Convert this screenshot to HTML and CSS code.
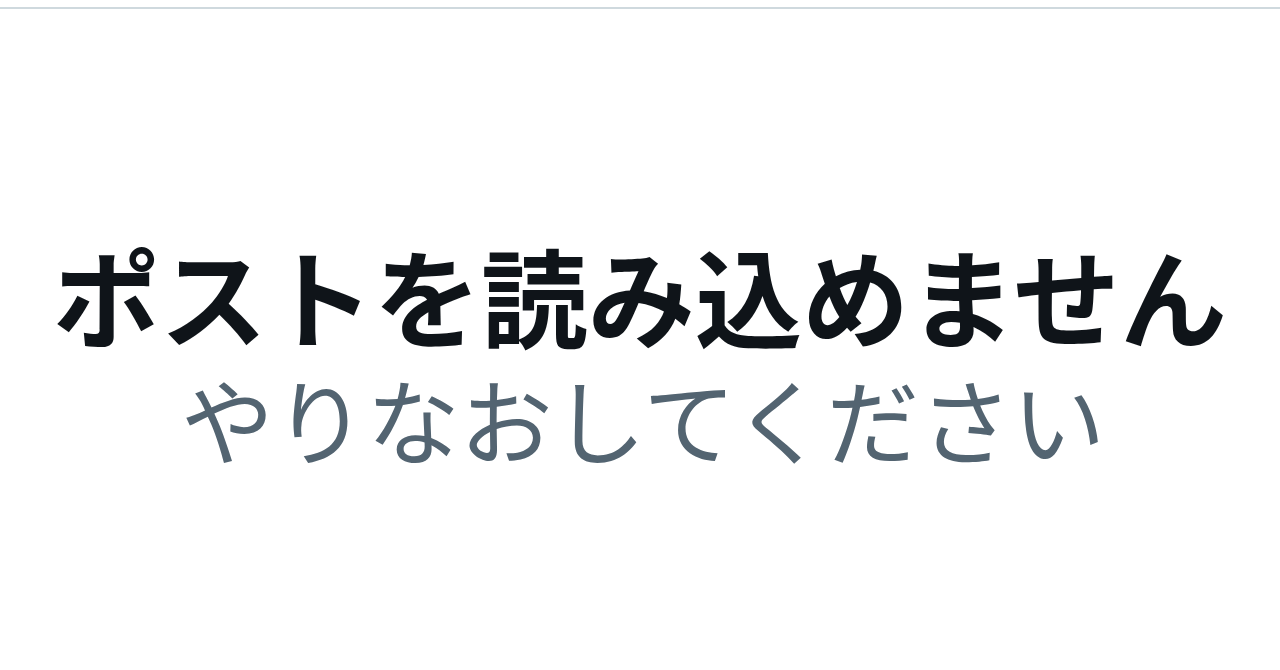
FILE: index.html
```html
<!DOCTYPE html>
<html lang="ja">
<head>
<meta charset="utf-8">
<title>ポストを読み込めません</title>
<link rel="stylesheet" href="styles.css">
</head>
<body>
<div class="page">
  <div class="divider"></div>
  <div class="message">
    <div class="title">ポストを読み込めません</div>
    <div class="hint">やりなおしてください</div>
  </div>
</div>
</body>
</html>
```
FILE: styles.css
```css
html, body {
  margin: 0;
  background: #ffffff;
}

.page {
  padding-top: 7px;
  font-family: "Noto Sans CJK JP", "Noto Sans", sans-serif;
}

.divider {
  height: 2px;
  background: #cfd9de;
}

.message {
  display: flex;
  flex-direction: column;
  align-items: center;
  padding-top: 225px;
}

.title {
  font-size: 107px;
  font-weight: 700;
  line-height: 120px;
  color: #0f1419;
}

.hint {
  font-size: 93px;
  font-weight: 400;
  line-height: 120px;
  color: #536471;
  margin-top: 4px;
  padding-left: 6px;
}
```
